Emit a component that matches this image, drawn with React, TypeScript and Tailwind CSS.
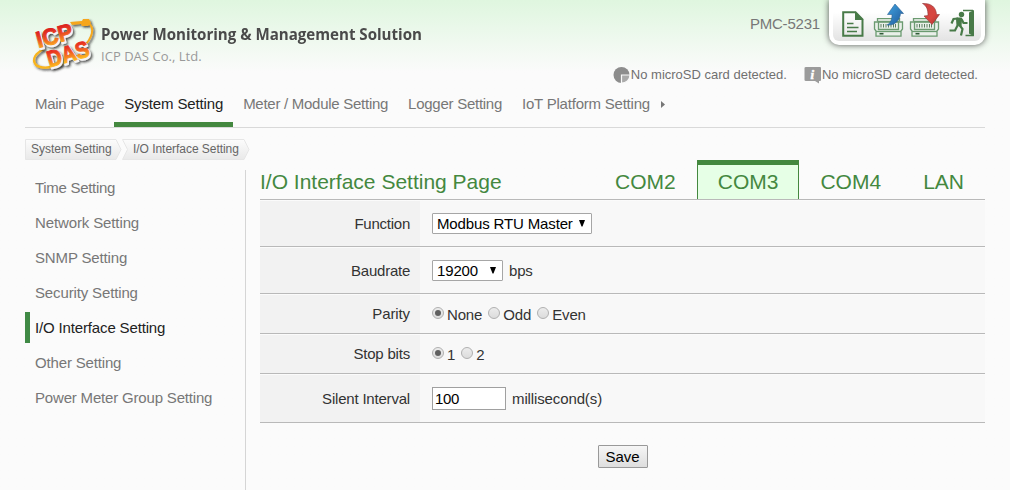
import React from "react";

const navItems = [
  { label: "Main Page", tracking: "tracking-[-0.28px]" },
  { label: "System Setting", tracking: "tracking-[-0.14px]" },
  { label: "Meter / Module Setting", tracking: "tracking-[-0.27px]" },
  { label: "Logger Setting", tracking: "tracking-[-0.26px]" },
  { label: "IoT Platform Setting", tracking: "tracking-[-0.22px]" },
];
const sideItems = [
  { label: "Time Setting", tracking: "tracking-[-0.3px]" },
  { label: "Network Setting", tracking: "tracking-[-0.12px]" },
  { label: "SNMP Setting", tracking: "tracking-[-0.15px]" },
  { label: "Security Setting", tracking: "tracking-[-0.14px]" },
  { label: "I/O Interface Setting", tracking: "tracking-[-0.15px]" },
  { label: "Other Setting", tracking: "tracking-[-0.16px]" },
  { label: "Power Meter Group Setting", tracking: "tracking-[-0.18px]" },
];
const tabs = ["COM2", "COM3", "COM4", "LAN"];

function Logo() {
  return (
    <svg width="68" height="64" viewBox="-2 0 68 64" className="shrink-0 overflow-visible">
      <defs>
        <linearGradient id="icp" x1="0" y1="0" x2="0" y2="1">
          <stop offset="0.2" stopColor="#dc2020" />
          <stop offset="0.5" stopColor="#ea4a22" />
          <stop offset="0.8" stopColor="#f79a20" />
        </linearGradient>
        <linearGradient id="das" x1="0" y1="0" x2="0" y2="1">
          <stop offset="0.2" stopColor="#e62a20" />
          <stop offset="0.5" stopColor="#f26420" />
          <stop offset="0.8" stopColor="#fcb620" />
        </linearGradient>
        <filter id="sh" x="-20%" y="-20%" width="150%" height="150%">
          <feDropShadow dx="1.5" dy="1.5" stdDeviation="0.9" floodColor="#222" floodOpacity="0.8" />
        </filter>
      </defs>
      <g filter="url(#sh)">
        <path d="M56 5C63 9 61 20 51 29" fill="none" stroke="#f5a81c" strokeWidth="2" />
        <path d="M12 31C4 35-1 41 4 47C9 51 20 50 31 46" fill="none" stroke="#f8b51f" strokeWidth="2.300" />
        <path d="M38 4L50 3L51 1H57L59 5L56 8L50 8L49 6L40 7Z" fill="#f5a61b" />
      </g>
      <g fontFamily="Liberation Sans" fontWeight="bold" strokeLinejoin="round" filter="url(#sh)">
        <g fill="#f5f5f5" stroke="#f5f5f5" strokeWidth="2">
          <text x="7.500" y="31.500" fontSize="23" textLength="37" lengthAdjust="spacingAndGlyphs" transform="rotate(-15 7.5 31.5)">ICP</text>
          <text x="18.500" y="51" fontSize="23" textLength="43" lengthAdjust="spacingAndGlyphs" transform="rotate(-16 18.5 51)">DAS</text>
        </g>
      </g>
      <g fontFamily="Liberation Sans" fontWeight="bold" strokeLinejoin="round" strokeWidth="0.900">
        <text x="6.500" y="30" fontSize="23" textLength="37" lengthAdjust="spacingAndGlyphs" fill="url(#icp)" stroke="url(#icp)" transform="rotate(-15 6.5 30)">ICP</text>
        <text x="17.500" y="49.500" fontSize="23" textLength="43" lengthAdjust="spacingAndGlyphs" fill="url(#das)" stroke="url(#das)" transform="rotate(-16 17.5 49.5)">DAS</text>
      </g>
    </svg>
  );
}

function DocIcon() {
  return (
    <svg width="22" height="26" viewBox="0 0 22 26">
      <path d="M1.200 1.200H13.500L20.500 8.500V24.800H1.200Z" fill="none" stroke="#487a48" strokeWidth="2" />
      <path d="M13 0.500V9H21.500Z" fill="#487a48" />
      <path d="M5 12.500H11.500M5 16.500H16.500M5 20.500H15" stroke="#487a48" strokeWidth="1.500" />
    </svg>
  );
}

function Device() {
  return (
    <g fill="none" stroke="#6b9a70" strokeWidth="1.300">
      <path d="M4.500 18.500V15.700H26.500V18.500" />
      <path d="M1.500 19H29.500V26L28 28V33.200H3V28L1.500 26Z" fill="#e9efe9" />
      <path d="M5.500 18.500H25.500V26.500H5.500Z" />
      <path d="M3 28.500H28" />
      <path d="M8 21V24.500M10.500 21V24.500M13 21V24.500M15.500 21V24.500M18 21V24.500M20.500 21V24.500M22.500 21V24.500" stroke="#5b7e60" strokeWidth="1" />
      <path d="M6.500 30.700H10.500" stroke="#315b38" strokeWidth="1.600" />
    </g>
  );
}

function UploadIcon() {
  return (
    <svg width="31" height="34" viewBox="0 0 31 34">
      <defs>
        <linearGradient id="up" x1="0" y1="0" x2="1" y2="1">
          <stop offset="0.2" stopColor="#3a96d4" />
          <stop offset="1" stopColor="#1f5798" />
        </linearGradient>
      </defs>
      <Device />
      <path d="M14.500 11.500L22 1L30.500 10.500H27.500C27 17 22 23 14 22C18 20 19 16 19 11.500Z" fill="url(#up)" stroke="#2a5f93" strokeWidth="0.600" />
    </svg>
  );
}

function DownloadIcon() {
  return (
    <svg width="31" height="34" viewBox="0 0 31 34">
      <defs>
        <linearGradient id="down" x1="0" y1="0" x2="1" y2="1">
          <stop offset="0" stopColor="#c44" />
          <stop offset="0.6" stopColor="#d8453f" />
          <stop offset="1" stopColor="#a83030" />
        </linearGradient>
      </defs>
      <Device />
      <path d="M13.500 0.500C22 0 27 4 27.500 11.500H30.500L23 21.500L15 13L19 12.500C19 7 18 3 13.500 0.500Z" fill="url(#down)" stroke="#8f3434" strokeWidth="0.600" />
    </svg>
  );
}

function ExitIcon() {
  return (
    <svg width="26" height="28" viewBox="0 0 26 28">
      <path d="M14 1.500H24M16.500 26.500H24" fill="none" stroke="#487a48" strokeWidth="1.400" />
      <path d="M20 3.500L25 1V27.500L20 24.500Z" fill="#487a48" />
      <circle cx="12.500" cy="5.500" r="2.700" fill="#487a48" />
      <path d="M7.500 9L12.500 9L12 17L8 16.500Z" fill="#487a48" stroke="#487a48" strokeLinejoin="round" />
      <path d="M9 9.500L4.500 10L2.500 14.500M12.500 10L14.500 14H18.500M10.500 16L13.500 20L12 26.500M8.500 16.500L6 21.500H0.500" fill="none" stroke="#487a48" strokeWidth="2.200" />
    </svg>
  );
}

function Status({ icon }: { icon: React.ReactNode }) {
  return (
    <div className="flex items-center text-[13px] leading-[18px] text-[#707070]">
      {icon}
      <span className="whitespace-nowrap">No microSD card detected.</span>
    </div>
  );
}

function Crumb({ label, first, width }: { label: string; first?: boolean; width: number }) {
  const d = first
    ? `M.5 .5H${width - 6}L${width - 1} 10.500L${width - 6} 20.500H.5Z`
    : `M.5 .5H${width - 6}L${width - 1} 10.500L${width - 6} 20.500H.5L5.500 10.500Z`;
  return (
    <div className="relative h-[21px]" style={{ width }}>
      <svg width={width} height="21" className="absolute inset-0">
        <defs>
          <linearGradient id="crumb" x1="0" y1="0" x2="0" y2="1">
            <stop offset="0" stopColor="#fcfcfc" />
            <stop offset="1" stopColor="#e9e9e9" />
          </linearGradient>
        </defs>
        <path d={d} fill="url(#crumb)" stroke="#e6e6e6" />
      </svg>
      <span className={`relative block whitespace-nowrap text-[12px] leading-[20px] text-[#666] ${first ? "pl-[6px]" : "pl-[11px] tracking-[-0.04px]"}`}>
        {label}
      </span>
    </div>
  );
}

function Row({
  label,
  height,
  labelClass,
  children,
}: {
  label: string;
  height: string;
  labelClass: string;
  children: React.ReactNode;
}) {
  return (
    <div className={`flex border-b border-[#b9b9b9] pt-px ${height}`}>
      <div className="flex w-[160px] items-center justify-end bg-[#f2f2f2] pr-[10px] text-[#333]">
        <span className={labelClass}>{label}</span>
      </div>
      <div className="flex flex-1 items-center bg-[#f8f8f8] pl-[12px] text-[#333]">{children}</div>
    </div>
  );
}

function Select({ value, width }: { value: string; width: string }) {
  return (
    <div className={`flex h-[21px] items-center justify-between rounded-[1px] border border-[#a6a6a6] bg-white pr-[6px] pl-[4px] text-black ${width}`}>
      <span className="leading-[19px] tracking-[-0.14px] whitespace-nowrap">{value}</span>
      <svg width="6" height="7" viewBox="0 0 6 7">
        <path d="M0 0H6L3.500 6.500H2.500Z" fill="#000" />
      </svg>
    </div>
  );
}

function Radio({ name, label, checked }: { name: string; label: string; checked?: boolean }) {
  return (
    <label className="flex items-center">
      <span className="relative mr-[3px] mb-[2px] flex h-[12px] w-[12px]">
        <input
          type="radio"
          name={name}
          defaultChecked={checked}
          className="peer h-[12px] w-[12px] appearance-none rounded-full border border-[#b0b0b0] bg-linear-to-b from-[#ececec] to-[#dcdcdc]"
        />
        <span className="absolute top-[3px] left-[3px] hidden h-[6px] w-[6px] rounded-full bg-[#606060] peer-checked:block" />
      </span>
      <span className="pt-[2px] tracking-[-0.15px]">{label}</span>
    </label>
  );
}

export default function App() {
  return (
    <div className="h-[490px] w-[1010px] overflow-hidden bg-[#fbfbfb] bg-linear-to-b from-[#dff6df] to-[#fbfbfb] to-[72px] px-[25px] font-['Liberation_Sans',Arial,sans-serif] text-[15px]">
      <header className="flex h-[92px] justify-between">
        <div className="flex pt-[18px] pl-[5px]">
          <Logo />
          <div className="pt-[5px] pl-[3px] font-['Open_Sans','Noto_Sans',sans-serif]">
            <div className="w-[330px] origin-left scale-x-[0.943] text-[16px] leading-[22px] font-bold whitespace-nowrap text-[#4a4a4a]">
              Power Monitoring &amp; Management Solution
            </div>
            <div className="text-[13px] leading-[22px] tracking-[0.03px] whitespace-nowrap text-[#999]">ICP DAS Co., Ltd.</div>
          </div>
        </div>
        <div className="flex flex-col items-end">
          <div className="flex">
            <span className="pt-[15px] pr-[9px] leading-[18px] tracking-[-0.2px] text-[#777]">PMC-5231</span>
            <div className="flex h-[45px] w-[156px] rounded-b-[10px] bg-white px-[4px] pb-[4px] shadow-[0_0_6px_#555]">
              <div className="flex flex-1 items-end rounded-b-[6px] bg-linear-to-b from-white from-30% to-[#e3e3e3] pb-[4px] pl-[9px]">
                <DocIcon />
                <div className="mr-[9px] ml-[9px] flex gap-[5px]">
                  <UploadIcon />
                  <DownloadIcon />
                </div>
                <ExitIcon />
              </div>
            </div>
          </div>
          <div className="flex gap-[17px] pt-[21px] pr-[7px]">
            <Status
              icon={
                <svg width="18" height="18" viewBox="0 0 18 18">
                  <circle cx="8.500" cy="9" r="8" fill="#8d8d8d" />
                  <path d="M8.500 17V9H17C17 14 13 17 8.500 17Z" fill="#aaa" stroke="#fafafa" strokeWidth="1.200" />
                </svg>
              }
            />
            <Status
              icon={
                <svg width="18" height="18" viewBox="0 0 18 18">
                  <path d="M2 1H16Q17 1 17 2V14Q17 15 16 15H15V17.500L11 15H2Q0.500 15 0.500 14V2Q0.500 1 2 1Z" fill="#9b9b9b" />
                  <text x="6.500" y="12.500" fontFamily="Liberation Serif" fontSize="13" fontWeight="bold" fontStyle="italic" fill="#fff" stroke="#fff" strokeWidth="0.500">
                    i
                  </text>
                </svg>
              }
            />
          </div>
        </div>
      </header>

      <nav className="flex h-[36px] border-b border-[#d9d9d9]">
        {navItems.map((item, i) => (
          <a
            key={item.label}
            className={`block h-[35px] px-[10px] leading-[24px] whitespace-nowrap ${item.tracking} ${i === 1 ? "border-b-[5px] border-[#44883f] text-[#222]" : "text-[#777]"}`}
          >
            {item.label}
          </a>
        ))}
        <svg width="4" height="7" viewBox="0 0 4 7" className="mt-[9px] ml-[1px]">
          <path d="M0 0L4 3.500L0 7Z" fill="#777" />
        </svg>
      </nav>

      <div className="flex pt-[11px]">
        <Crumb label="System Setting" first width={97} />
        <Crumb label="I/O Interface Setting" width={128} />
      </div>

      <div className="flex">
        <aside className="mt-[10px] flex h-[320px] w-[221px] flex-col gap-[4px] border-r border-[#d5d5d5] pt-[2px]">
          {sideItems.map((item, i) => (
            <a
              key={item.label}
              className={`block h-[31px] border-l-[5px] pl-[5px] leading-[32px] ${item.tracking} ${i === 4 ? "border-[#408a45] text-[#222]" : "border-transparent text-[#777]"}`}
            >
              {item.label}
            </a>
          ))}
        </aside>

        <main className="ml-[14px] flex-1">
          <div className="flex h-[40px] items-end justify-between border-b border-[#b9b9b9] text-[21px] text-[#44883f]">
            <h1 className="h-[39px] leading-[44px]">I/O Interface Setting Page</h1>
            <div className="flex">
              {tabs.map((tab, i) => (
                <a
                  key={tab}
                  className={`block h-[39px] border-x border-t-[5px] px-[20px] leading-[34px] ${i === 1 ? "border-[#44883f] bg-[#e6ffe6]" : "border-transparent"}`}
                >
                  {tab}
                </a>
              ))}
            </div>
          </div>

          <Row label="Function" height="h-[47px]" labelClass="pt-[2px] tracking-[-0.25px]">
            <Select value="Modbus RTU Master" width="w-[160px]" />
          </Row>
          <Row label="Baudrate" height="h-[47px]" labelClass="pt-[2px] tracking-[-0.25px]">
            <Select value="19200" width="w-[71px]" />
            <span className="pt-[2px] pl-[6px] tracking-[-0.2px]">bps</span>
          </Row>
          <Row label="Parity" height="h-[40px]" labelClass="tracking-[-0.1px]">
            <div className="flex gap-[6px]">
              <Radio name="parity" label="None" checked />
              <Radio name="parity" label="Odd" />
              <Radio name="parity" label="Even" />
            </div>
          </Row>
          <Row label="Stop bits" height="h-[40px]" labelClass="tracking-[-0.2px]">
            <div className="flex gap-[6px]">
              <Radio name="stop" label="1" checked />
              <Radio name="stop" label="2" />
            </div>
          </Row>
          <Row label="Silent Interval" height="h-[49px]" labelClass="pt-[2px] tracking-[-0.2px]">
            <input defaultValue="100" className="h-[23px] w-[74px] border border-[#a0a0a0] bg-white px-[2px] tracking-[-0.3px] text-black" />
            <span className="pt-[2px] pl-[6px] tracking-[-0.12px]">millisecond(s)</span>
          </Row>

          <div className="flex justify-center pt-[22px]">
            <button className="h-[23px] w-[50px] rounded-[1px] border border-[#999] bg-linear-to-b from-[#f6f6f6] to-[#dedede] leading-[21px] text-black">
              Save
            </button>
          </div>
        </main>
      </div>
    </div>
  );
}
